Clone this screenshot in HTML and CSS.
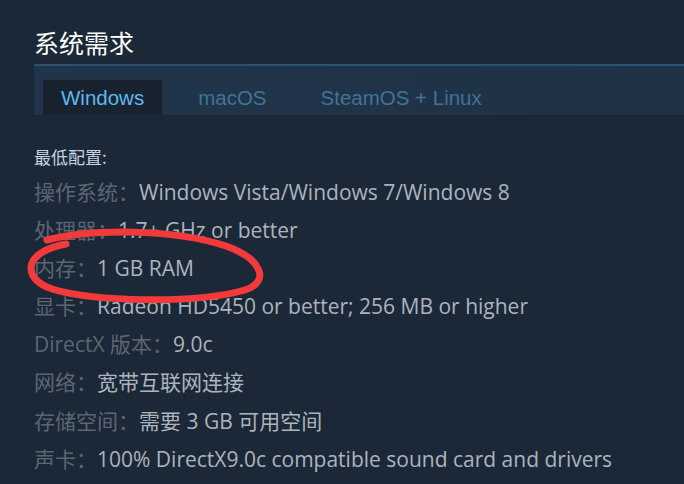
FILE: index.html
```html
<!DOCTYPE html>
<html lang="zh-CN">
<head>
<meta charset="utf-8">
<link rel="stylesheet" href="styles.css">
</head>
<body>
<div class="page">
  <h2 class="title">系统需求</h2>
  <div class="tabbar">
    <div class="tab active">Windows</div>
    <div class="tab">macOS</div>
    <div class="tab">SteamOS + Linux</div>
  </div>
  <div class="reqs">
    <div class="reqs-head">最低配置:</div>
    <ul class="reqs-list">
      <li><span class="lbl">操作系统：</span><span class="val">Windows Vista/Windows 7/Windows 8</span></li>
      <li><span class="lbl">处理器：</span><span class="val">1.7+ GHz or better</span></li>
      <li><span class="lbl">内存：</span><span class="val">1 GB RAM</span></li>
      <li><span class="lbl">显卡：</span><span class="val">Radeon HD5450 or better; 256 MB or higher</span></li>
      <li><span class="lbl">DirectX 版本：</span><span class="val">9.0c</span></li>
      <li><span class="lbl">网络：</span><span class="val">宽带互联网连接</span></li>
      <li><span class="lbl">存储空间：</span><span class="val">需要 3 GB 可用空间</span></li>
      <li><span class="lbl">声卡：</span><span class="val">100% DirectX9.0c compatible sound card and drivers</span></li>
    </ul>
  </div>
  <svg class="mark" width="684" height="484" viewBox="0 0 684 484">
    <path d="M47 240 C 90 229, 170 228, 226 246 C 260 258, 272 281, 245 290 C 196 304, 95 302, 52 289 C 22 279, 22 252, 66 244" fill="none" stroke="#f23a3a" stroke-width="7" stroke-linecap="round" stroke-linejoin="round"/>
  </svg>
</div>
</body>
</html>
```
FILE: styles.css
```css
html, body {
  margin: 0;
  padding: 0;
  background: #1b2838;
}
.page {
  position: relative;
  width: 684px;
  height: 484px;
  overflow: hidden;
  padding-left: 34px;
  box-sizing: border-box;
  font-family: "Open Sans", "Noto Sans CJK SC", sans-serif;
}
.title {
  margin: 0;
  padding: 27px 0 7px 0;
  height: 64px;
  box-sizing: border-box;
  font-size: 25px;
  line-height: 30px;
  font-weight: normal;
  color: #ffffff;
  font-family: "Noto Sans CJK SC", sans-serif;
}
.tabbar {
  border-top: 2px solid #2c5272;
  background: linear-gradient(90deg, #21354a 0%, #1f3145 100%);
  height: 51px;
  box-sizing: border-box;
  padding: 14px 0 0 9px;
  display: flex;
  gap: 18px;
  font-family: "Liberation Sans", Arial, sans-serif;
  font-size: 20.5px;
}
.tab {
  height: 35px;
  line-height: 36px;
  padding: 0 18px;
  color: #3f7396;
}
.tab.active {
  background: #19232f;
  color: #5cb8f2;
}
.reqs {
  padding-top: 29px;
}
.reqs-head {
  font-family: "Noto Sans CJK SC", sans-serif;
  font-size: 17px;
  line-height: 26px;
  height: 29px;
  color: #c7d5e0;
}
.reqs-list {
  list-style: none;
  margin: 0;
  padding: 0;
  font-size: 21px;
  line-height: 38.1px;
}
.lbl {
  color: #5b6671;
}
.val {
  color: #acb4bc;
}
.mark {
  position: absolute;
  left: 0;
  top: 0;
  pointer-events: none;
}
```
